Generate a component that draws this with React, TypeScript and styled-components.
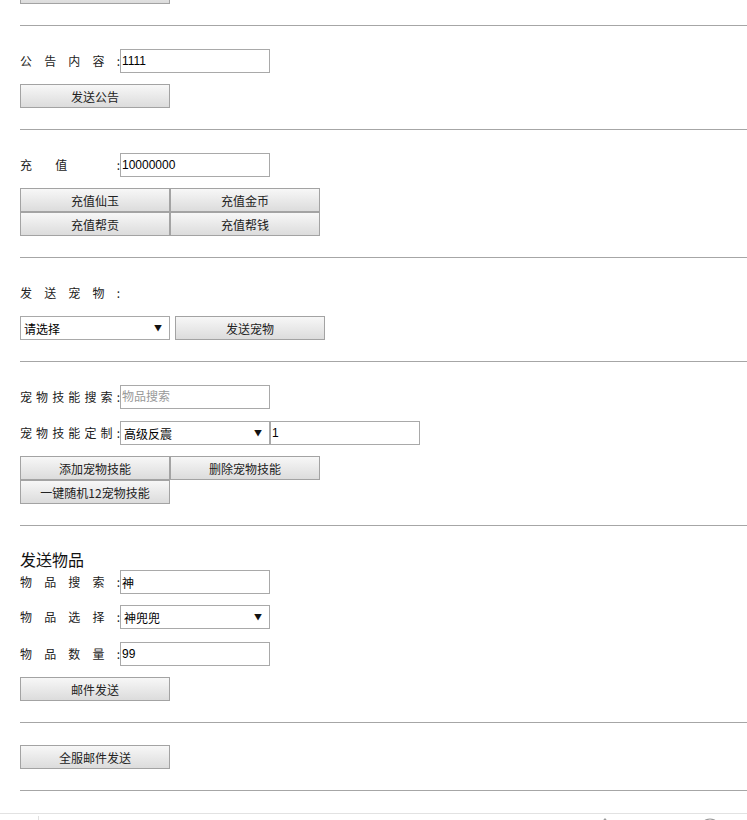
import React from "react";
import styled, {createGlobalStyle} from "styled-components";

const GlobalStyle = createGlobalStyle`
  html, body {
    margin: 0;
    padding: 0;
    background: #fff;
    overflow: hidden;
  }
  body {
    font-family: "Noto Sans CJK SC", "Liberation Sans", sans-serif;
    font-size: 12px;
    color: #222;
  }
`;

const Label = ({text}: {text: string}) => (
  <LabelBox>
    {text.split("").map((ch, i) => (
      <span key={i}>{ch}</span>
    ))}
  </LabelBox>
);

const Picker = ({value}: {value: string}) => (
  <SelectWrap>
    <Select defaultValue={value}>
      <option>{value}</option>
    </Select>
    <Arrow>▼</Arrow>
  </SelectWrap>
);

const App = () => {
  return (
    <>
      <GlobalStyle />
      <Page>
        {/* section scrolled above the top of the window */}
        <Section>
          <Row>
            <Button aria-label="发送" />
          </Row>
        </Section>

        <Section>
          <Row>
            <Label text="公告内容:" />
            <Input defaultValue="1111" />
          </Row>
          <Row>
            <Button>发送公告</Button>
          </Row>
        </Section>

        <Section>
          <Row>
            <Label text="充值 :" />
            <Input defaultValue="10000000" />
          </Row>
          <ButtonGrid>
            <Button>充值仙玉</Button>
            <Button>充值金币</Button>
            <Button>充值帮贡</Button>
            <Button>充值帮钱</Button>
          </ButtonGrid>
        </Section>

        <Section>
          <Row>
            <Label text="发送宠物:" />
          </Row>
          <Row $gap={5}>
            <Picker value="请选择" />
            <Button>发送宠物</Button>
          </Row>
        </Section>

        <Section>
          <Row>
            <Label text="宠物技能搜索:" />
            <Input placeholder="物品搜索" />
          </Row>
          <Row $mt={1}>
            <Label text="宠物技能定制:" />
            <Picker value="高级反震" />
            <Input defaultValue="1" />
          </Row>
          <ButtonGrid>
            <Button>添加宠物技能</Button>
            <Button>删除宠物技能</Button>
            <Button>一键随机12宠物技能</Button>
          </ButtonGrid>
        </Section>

        <Section>
          <ItemBlock>
            <Heading>发送物品</Heading>
            <Row>
              <Label text="物品搜索:" />
              <Input defaultValue="神" />
            </Row>
          </ItemBlock>
          <Row $height={26}>
            <Label text="物品选择:" />
            <Picker value="神兜兜" />
          </Row>
          <Row>
            <Label text="物品数量:" />
            <Input defaultValue="99" />
          </Row>
          <Row>
            <Button>邮件发送</Button>
          </Row>
        </Section>

        <Section $top={22}>
          <Row>
            <Button>全服邮件发送</Button>
          </Row>
        </Section>

        <Footer>
          <FooterDivider />
          <FooterIcons>
            <svg width="14" height="14" viewBox="0 0 14 14">
              <path d="M1 9 L7 2 L13 9" fill="none" stroke="#999" strokeWidth="1.2" />
            </svg>
            <svg width="24" height="24" viewBox="0 0 24 24">
              <circle cx="12" cy="12" r="10" fill="none" stroke="#999" strokeWidth="1.2" />
            </svg>
          </FooterIcons>
        </Footer>
      </Page>
    </>
  );
};

const Page = styled.div`
  margin-top: -43px;
  padding-left: 20px;
`;

const Section = styled.div<{$top?: number}>`
  display: flex;
  flex-direction: column;
  gap: 11px;
  padding: ${(p) => p.$top ?? 23}px 0 21px;
  border-bottom: 1px solid #a6a6a6;
`;

const Row = styled.div<{$gap?: number; $height?: number; $mt?: number}>`
  display: flex;
  align-items: flex-start;
  gap: ${(p) => p.$gap || 0}px;
  height: ${(p) => p.$height || 24}px;
  margin-top: ${(p) => p.$mt || 0}px;
`;

const ItemBlock = styled.div`
  display: flex;
  flex-direction: column;
`;

const Heading = styled.div`
  font-size: 16px;
  line-height: 21px;
  height: 21px;
  color: #111;
`;

const LabelBox = styled.div`
  width: 100px;
  display: flex;
  justify-content: space-between;
  font-size: 12px;
  line-height: 24px;
  color: #222;
  span {
    white-space: pre;
  }
`;

const Input = styled.input`
  box-sizing: border-box;
  width: 150px;
  height: 24px;
  margin: 0;
  padding: 0 1px;
  border: 1px solid #a9a9a9;
  background: #fff;
  font-family: "Liberation Sans", "Noto Sans CJK SC", sans-serif;
  font-size: 12px;
  color: #000;
  outline: none;
  &::placeholder {
    color: #999;
    font-family: "Noto Sans CJK SC", sans-serif;
  }
`;

const SelectWrap = styled.div`
  position: relative;
  width: 150px;
  height: 24px;
`;

const Select = styled.select`
  box-sizing: border-box;
  width: 150px;
  height: 24px;
  margin: 0;
  padding: 0 3px;
  border: 1px solid #a9a9a9;
  border-radius: 0;
  background: #fff;
  appearance: none;
  -webkit-appearance: none;
  font-family: "Noto Sans CJK SC", sans-serif;
  font-size: 12px;
  color: #000;
  outline: none;
`;

const Arrow = styled.span`
  position: absolute;
  right: 8px;
  top: 0;
  line-height: 24px;
  font-size: 8px;
  color: #111;
  pointer-events: none;
`;

const Button = styled.button`
  box-sizing: border-box;
  width: 150px;
  height: 24px;
  margin: 0;
  padding: 0;
  border: 1px solid #a3a3a3;
  border-radius: 0;
  background: linear-gradient(#f7f7f7, #dcdcdc);
  font-family: "Noto Sans CJK SC", sans-serif;
  font-size: 12px;
  color: #222;
  cursor: pointer;
`;

const ButtonGrid = styled.div`
  display: grid;
  grid-template-columns: 150px 150px;
  grid-auto-rows: 24px;
`;

const Footer = styled.div`
  margin: 22px 0 0 -20px;
  height: 60px;
  border-top: 1px solid #e2e2e2;
  display: flex;
  align-items: flex-start;
`;

const FooterDivider = styled.div`
  width: 1px;
  height: 30px;
  margin: 2px 0 0 38px;
  background: #e0e0e0;
`;

const FooterIcons = styled.div`
  margin-left: auto;
  margin-right: 25px;
  padding-top: 3px;
  display: flex;
  align-items: flex-start;
  gap: 86px;
`;

export default App;
